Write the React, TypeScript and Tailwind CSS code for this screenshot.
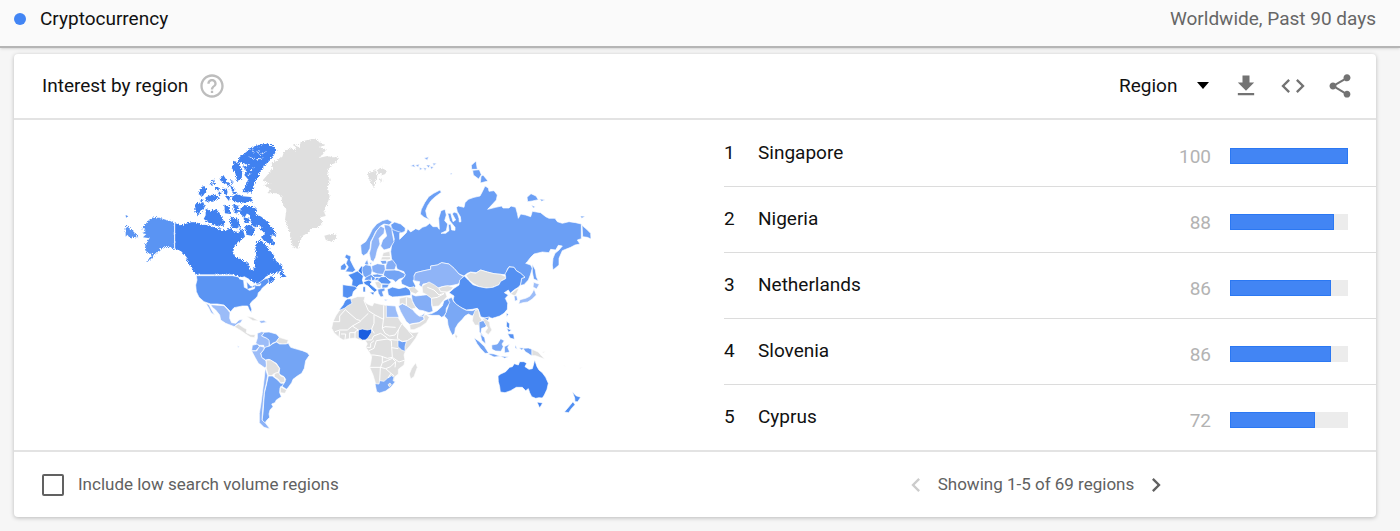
import { useState } from "react";

type Shape = [fill: string, d: string];

interface MapPart {
  name: string;
  transform: string;
  rough?: boolean;
  shapes: Shape[];
  borders?: string;
}

const NO_DATA = "#dfdfdf";

const rows = [
  { name: "Singapore", value: 100 },
  { name: "Nigeria", value: 88 },
  { name: "Netherlands", value: 86 },
  { name: "Slovenia", value: 86 },
  { name: "Cyprus", value: 72 },
];

const mapParts: MapPart[] = [
  {
    name: "Canada and Alaska",
    transform: "translate(0 0)",
    rough: true,
    shapes: [
      ["#5a94f3", "M70 295L85 275 95 265 110 261 130 266 150 272 167 277V360L155 352 140 350 125 358 110 372 95 388 80 400 100 372 85 370 78 355 80 340 92 325 72 322 82 312 70 310 80 300z"],
      ["#5a94f3", "M20 286L35 298 45 306 58 322 42 322 35 327 25 314 20 320zM20 255l8 4-7 4z"],
      ["#4081f0", "M167 277L185 286 205 280 220 276 235 278 250 284 265 285 285 292 300 298 320 302 335 294 345 302 358 310 362 295 372 300 378 320 360 335 345 352 343 372 350 382 365 388 380 395 388 402 393 418 402 422 408 408 405 395 412 380 410 362 408 340 425 330 440 345 450 358 462 372 468 390 480 400 490 408 488 420 475 428 455 432 440 440 428 455 415 462 410 458 400 462 395 450 380 445 355 437 342 434H237L228 420 215 398 200 378 185 362 167 358z"],
      ["#4081f0", "M440 450L455 438 467 444 460 456 450 460zM482 432L490 420 495 433 503 440 488 442z"],
      ["#4081f0", "M200 385L210 388 222 402 232 420 236 436 226 428 214 408z"],
      ["#4081f0", "M392 260L412 253 427 260 442 272 452 286 464 298 472 318 456 316 462 330 470 348 452 342 436 334 426 320 438 312 430 302 416 294 402 288 396 275z"],
      ["#4081f0", "M364 236L373 225 386 228 400 228 412 238 414 258 395 262 385 248 377 262 363 252z"],
      ["#4081f0", "M260 236L275 244 290 238 300 246 308 260 316 276 300 290 285 285 268 276 254 267 260 256zM229 220L253 217 258 230 246 243 238 258 229 246z"],
      ["#4081f0", "M316 224L332 228 334 252 318 250zM335 260L358 267 364 292 344 296 332 280zM343 222L358 228 356 251 344 245zM378 288L396 284 408 300 402 318 382 314zM374 262l17 4-2 14-14-4zM300 268l14 6 4 14-12-2z"],
      ["#4081f0", "M358 84L385 64 400 51 420 44 445 41 466 49 472 65 458 83 445 96 432 114 421 126 419 142 409 152 404 168 398 188 371 186 381 162 389 150 376 135 384 120 369 111 392 104 360 97z"],
      ["#4081f0", "M344 92L360 98 370 122 368 147 354 153 349 130 339 115zM338 200L355 191 370 199 395 201 402 214 370 218 343 216z"],
      ["#4081f0", "M260 202L284 192 302 204 282 215 258 214zM236 191L252 168 266 178 251 199zM302 150L313 135 324 152 318 163zM306 176L328 176 323 197zM332 164L349 178 344 192zM271 162l15-14 2 17zM288 170l14 2-5 13zM320 156l14 2-5 11zM334 150l11 4-5 9zM318 198l16 0-4 15zM242 208l12 0-6 9zM340 184l14 2-4 10zM296 188l12 0-4 10z"],
      ["#ffffff", "M400 52l5 18-3 0zM420 50l-2 20-3-2zM445 62l-24 12 1 4zM386 78l20 8-2 3zM436 82l-22 6 0 4zM410 110l-14 8 1 3zM398 130l-12 6 1 3zM415 284l16 8-10 8-10-6z"],
    ],
    borders: "M167 274V358M237 435H342",
  },
  {
    name: "Greenland, Svalbard",
    transform: "translate(360 0)",
    rough: true,
    shapes: [
      [NO_DATA, "M70 152L85 135 102 115 95 100 112 92 130 80 135 65 155 55 172 62 165 42 182 52 185 35 205 30 225 26 245 38 260 45 240 52 262 58 250 75 238 84 265 78 280 82 298 82 290 98 275 105 265 125 272 150 266 175 272 200 264 225 255 240 260 258 245 262 250 280 240 290 215 298 205 310 190 318 180 340 178 356 164 353 155 330 150 300 138 270 142 240 130 220 128 200 115 190 84 190 96 178 75 165 95 160z"],
      [NO_DATA, "M387 128L400 126 408 120 415 130 414 145 408 158 406 178 400 165 388 142zM412 120L430 113 447 124 435 134 420 131zM423 145l11 8-9 6z"],
      [NO_DATA, "M256 317L275 312 293 314 290 327 274 336 260 329z"],
    ],
  },
  {
    name: "United States and Latin America",
    transform: "translate(210 390)",
    shapes: [
      ["#5a94f3", "M22 47H130L145 50 160 58 172 64 185 78 200 75 215 65 225 58 236 54 240 66 230 76 220 84 215 92 208 98 206 108 200 115 188 125 183 133 188 148 187 158 180 148 176 138 160 138 150 140 135 143 125 155 115 145 105 135 85 132 65 132 45 125 30 112 22 95 20 75 24 60z"],
      ["#ffffff", "M150 56l16-6 14 8-14 3zM164 62l9 2 2 22-9-4zM180 62l14 6-4 12-6-6zM176 88l22-8-2 6-14 5zM200 77l16-6-3 6z"],
      ["#9bbcf8", "M65 134L105 137 115 148 123 158 122 175 128 188 140 190 150 180 161 178 155 188 145 192 136 200 110 190 95 180 92 165 80 150 70 142z"],
      ["#9bbcf8", "M50 130L60 134 68 150 77 166 66 158 58 142z"],
      [NO_DATA, "M136 200L148 192 162 202 173 208 172 218 185 224 199 224 196 233 184 231 170 222 156 212zM172 169L190 172 210 182 192 182z"],
      ["#9bbcf8", "M210 183L224 181 234 187 216 190zM146 257l5 3-4 3z"],
      ["#9bbcf8", "M205 220L218 215 226 217 218 228 232 234 242 240 240 258 226 264 224 256 210 256 200 250 205 235z"],
      ["#78a7f5", "M226 217L240 216 262 222 271 232 262 245 250 250 242 258 240 240 232 234 218 228z"],
      [NO_DATA, "M271 232L280 235 298 240 294 251 280 253 272 251 262 245z"],
      ["#85aef6", "M190 256L205 252 212 260 200 272 188 272z"],
      ["#9bbcf8", "M188 273L203 273 212 258 226 262 224 270 215 280 220 294 231 302 233 318 228 324 208 310 198 292z"],
      ["#74a5f5", "M228 262L242 258 250 252 262 246 272 252 290 252 298 250 305 262 325 268 340 272 355 278 361 286 350 302 346 325 338 340 325 348 312 358 308 368 298 382 292 388 278 378 286 368 290 358 285 350 270 342 272 325 262 310 248 302 240 298 230 300 218 292 216 280 224 270z"],
      [NO_DATA, "M232 300L245 300 262 312 271 325 268 337 255 341 248 347 238 347 232 325z"],
      [NO_DATA, "M256 341L268 337 275 348 286 352 288 366 275 369 268 358 256 350z"],
      ["#74a5f5", "M238 348L250 348 266 360 275 370 285 370 278 379 273 385 272 398 277 410 262 420 258 428 248 432 252 440 243 450 240 462 242 472 232 482 228 490 219 480 222 460 224 430 226 400 232 375z"],
      [NO_DATA, "M274 380L293 390 288 400 274 398z"],
      ["#8db3f7", "M229 324L236 347 232 370 226 395 223 425 221 450 219 480 230 490 243 507 225 502 211 488 211 460 216 430 220 400 225 360z"],
    ],
  },
  {
    name: "Russia and Central Asia",
    transform: "translate(840 60)",
    shapes: [
      ["#6b9ff5", "M-20 222L-5 232 8 240 15 235 18 245 2 250 2 268 12 258 22 248 26 236 35 246 50 236 60 240 70 232 82 228 92 220 102 230 115 230 121 238 119 205 126 182 138 178 142 195 137 212 146 222 142 242 126 250 140 250 150 242 148 224 155 222 158 240 168 241 168 232 152 212 146 190 155 190 162 215 170 210 160 192 165 186 175 190 180 205 181 216 186 215 184 200 175 185 172 172 178 168 195 172 198 158 208 148 225 142 243 138 250 125 258 108 268 114 270 124 285 122 295 135 292 150 283 160 266 178 290 172 308 168 312 174 330 174 336 168 350 172 355 190 358 205 365 192 380 195 395 200 400 184 425 188 440 200 450 205 468 205 475 215 490 220 510 215 530 218 547 222V266L535 270 543 282 528 285 515 292 500 298 490 302 480 325 480 345 462 360 460 345 462 325 468 310 480 300 490 288 478 286 470 300 455 298 450 308 430 306 405 312 395 322 385 335 380 340 395 345 400 355 394 375 388 390 375 404 364 406 368 385 378 382 365 370 352 362 345 352 330 350 325 358 320 374 305 373 285 371 265 366 245 360 232 368 215 366 205 370 195 378 180 372 165 355 150 342 128 338 115 345 95 348 95 358 75 362 50 368 45 378 50 386 42 392 50 408 46 416 30 412 8 402 6 392 18 378 15 365-5 358-10 345-22 330-25 305-22 285-14 268-18 250-26 232z"],
      ["#6b9ff5", "M549 226L563 238 575 250 576 267 565 262 551 260zM64 192L67 178 77 158 89 140 104 130 123 120 127 127 109 140 96 152 86 167 80 182 84 200 92 209 75 202z"],
      ["#6b9ff5", "M217 46L231 33 235 58 218 58zM221 61L241 59 247 74 239 87 223 75zM246 79L252 75 267 93 244 99zM384 142L396 131 411 138 418 149 400 153 386 155zM422 147l17 2-11 5zM397 166l12 4-6 4zM544 198l15 1-11 6zM400 343L409 360 412 380 418 393 404 387 400 366z"],
      ["#8fb4f7", "M34 48l11-5 4 9zM49 46l12-4-3 10zM61 52l10 4-9 5zM75 24l14-4-4 11zM81 45l13 0-5 9zM93 49l11 2-7 7zM101 39l12 1-9 7zM73 53l10 2-5 7zM153 69l7 1-4 5z"],
      ["#8fb4f7", "M45 378L50 368 75 362 95 358 95 348 115 345 128 338 150 342 165 355 180 372 194 380 185 392 178 402 165 405 150 408 140 408 125 411 112 416 98 404 85 400 72 402 68 412 60 404 62 395 45 392z"],
      [NO_DATA, "M201 376L215 367 230 370 245 360 265 366 285 371 305 373 320 380 320 386 307 392 299 405 280 412 262 414 240 410 222 400 210 390z"],
    ],
  },
  {
    name: "East Asia and Oceania",
    transform: "translate(930 420)",
    shapes: [
      ["#5490f2", "M106 18L118 30 132 44 150 50 172 54 192 52 210 44 215 34 230 26 230 20 228 12 235 0 240-9 255-8 262 2 275 10 288 22 278 25 274 45 268 52 258 58 250 64 244 70 238 60 226 68 238 75 229 85 236 100 235 118 225 130 212 138 200 142 190 145 178 142 168 145 155 140 150 125 145 115 130 118 112 120 95 112 80 102 72 90 75 78 60 68 75 55 90 45 92 30z"],
      [NO_DATA, "M244 72L262 58 270 55 264 68 258 78z"],
      ["#8fb4f7", "M255 78L263 77 266 90 258 94z"],
      ["#9bbcf8", "M314 37L331 43 323 57 312 51zM315 57L322 75 309 88 296 96 282 98 269 102 273 89 290 85 302 79 310 68z"],
      ["#7aa8f5", "M55 88L68 82 74 95 85 105 100 115 112 121 130 122 145 116 138 130 130 138 118 132 108 138 100 148 88 160 79 175 77 190 70 196 62 180 57 165 55 148 46 138 52 125 58 108z"],
      ["#6fa1f5", "M-8 134L10 130 25 122 40 108 45 92 57 86 62 98 52 115 51 128 45 138 38 142 30 136 10 136z"],
      [NO_DATA, "M79 191L86 199 82 206 78 199z"],
      [NO_DATA, "M138 122L148 118 152 140 159 150 152 160 153 178 147 165 138 166 130 152 132 138z"],
      ["#78a7f5", "M150 156L165 151 176 162 168 172 158 175 156 188 166 202 158 196 151 185zM163 144L182 141 176 152z"],
      [NO_DATA, "M160 146L170 147 182 157 183 168 189 180 178 194 168 186 176 174 168 160z"],
      ["#6fa1f5", "M154 192L167 203 170 222 158 211zM135 203L150 214 166 229 180 251 168 250 154 235 144 221zM173 250L195 252 214 259 195 261z"],
      ["#78a7f5", "M188 225L205 222 215 206 226 212 219 222 223 230 216 244 200 243 189 238zM226 230L242 222 236 232 242 246 227 249zM213 258l26 2-12 5zM259 224l6 14-7-5zM270 233l17 1-9 6z"],
      ["#5490f2", "M233 154L242 161 241 177 232 169zM236 191L254 192 256 208 243 204zM233 175l14 5-8 7zM232 129l6 4-5 8z"],
      ["#6fa1f5", "M282 235L298 234 309 238 309 258 297 250 289 245z"],
      [NO_DATA, "M309 238L328 246 338 258 348 268 330 261 320 257 309 257z"],
      ["#eeeeee", "M338 246l14-3-8 6zM362 240l8 6-6-2zM450 294l12-4-8 6zM404 284l6 8-5-3z"],
      ["#4182f0", "M207 318L215 312 230 305 242 292 250 290 256 281 268 285 272 275 285 275 293 280 288 290 300 298 310 296 314 282 317 269 324 290 330 300 340 308 350 322 358 340 354 358 346 375 340 384 330 383 320 385 308 380 302 368 298 356 290 362 280 352 262 352 245 362 228 368 214 366 212 350 208 335z"],
      ["#4182f0", "M324 396L341 399 332 414z"],
      ["#4f8ef2", "M430 365L441 377 455 382 446 395 438 395 437 384zM432 395L438 404 427 416 419 428 406 426 419 411z"],
    ],
  },
  {
    name: "Africa and Middle East",
    transform: "translate(600 450)",
    shapes: [
      [NO_DATA, "M62 90L50 108 42 125 38 145 45 158 60 172 72 180 90 176 108 174 118 178 130 182 138 180 145 192 140 202 150 215 158 230 155 250 152 262 162 285 168 305 175 330 185 336 200 330 215 318 225 302 228 290 238 282 238 268 255 255 258 240 255 225 260 212 275 195 290 175 300 156 280 158 268 152 255 138 245 125 236 110 230 85 200 76 180 72 165 68 160 78 145 72 135 62 138 50 115 50 98 56z"],
      ["#5490f2", "M95 56L99 70 85 78 78 84 66 89 60 90 72 75 78 62 85 57z"],
      ["#9bbcf8", "M202 76L230 78 232 90 240 112H202z"],
      ["#1a5ee0", "M118 150L130 147 145 150 158 147 157 158 148 172 140 180 130 180 118 172z"],
      ["#6fa1f5", "M237 181L248 184 262 184 258 200 258 214 248 210 237 200z"],
      ["#7aa8f5", "M168 311L180 312 182 302 195 304 205 295 218 287 225 292 222 302 229 305 215 322 200 333 182 339 173 335z"],
      [NO_DATA, "M207 314L213 309 217 315 211 320z"],
      [NO_DATA, "M290 248L295 262 285 290 275 297 271 282 278 265z"],
      ["#9bbcf8", "M238 78L250 71 265 78 280 88 290 100 300 108 312 108 316 118 300 128 285 130 272 133 262 125 252 108 245 95z"],
      [NO_DATA, "M272 134L285 131 300 129 316 119 314 106 322 104 331 112 322 128 305 140 285 149 274 149z"],
      ["#5490f2", "M300 107L310 106 318 98 313 109z"],
      [NO_DATA, "M241 55L262 50 278 54 282 68 291 84 278 87 262 76 250 70 241 74z"],
      ["#83adf6", "M277 43L290 48 310 46 325 44 338 55 338 75 342 94 330 98 312 92 300 90 288 78 280 62z"],
    ],
    borders:
      "M42 125H62V108L80 88M80 90L112 118 125 122 148 100M135 62L148 92 168 105 194 118V76M165 105V130L158 147 166 160M194 112L190 145 198 160 212 168 228 165 238 150 248 132M48 155L62 150H85L100 138 125 124M60 172L62 152M78 178L80 162 66 162M92 176V158H110M108 174V155L118 150M100 138L118 150M140 180L158 180 164 168M164 168L185 160 205 174M142 202H155V190L165 182M150 212L165 205 172 182 205 177 217 182 218 200 220 232 205 235 185 228 165 225 156 225M205 177L228 180 238 180M152 262H185M190 228V248L184 264M190 248L205 242 220 235 230 245 215 260 200 266 185 262M218 203L238 206M220 232L240 246 258 240M230 245L228 262M184 264L182 302M200 266L216 280 207 294M216 280L226 288M238 150L235 175 250 185 265 182 283 170 268 152M190 145L198 140 230 142M262 52L262 76",
  },
  {
    name: "Europe",
    transform: "translate(615 210)",
    shapes: [
      [NO_DATA, "M294 258L315 246 330 254 345 265 355 260 372 257 388 262 380 271 365 278 369 290 355 305 345 318 325 320 322 295 308 284 296 278z"],
      ["#6b9ff5", "M200 74L212 66 230 72 244 84 243 94 233 98 215 92 205 88z"],
      ["#79a8f5", "M112 160L110 135 125 125 135 108 145 88 158 72 175 62 190 58 205 66 195 75 180 72 170 78 155 95 148 110 140 125 138 145 130 160 118 167z"],
      ["#8fb4f7", "M170 78L182 85 180 100 165 115 168 132 160 150 155 172 148 185 140 180 136 160 140 145 142 125 150 108 158 92z"],
      ["#83adf6", "M182 85L180 74 195 76 203 85 205 100 210 125 198 145 180 150 170 138 176 120 188 108z"],
      ["#79a8f5", "M122 190L130 178 134 194 126 196zM136 188l7 0-2 7z"],
      ["#5c96f4", "M67 163L81 169 79 180 89 200 95 210 86 217 64 215 73 201 66 190 71 178 62 172zM50 198L62 189 68 200 63 210 50 210z"],
      ["#4b8bf1", "M72 224L85 220 100 213 112 222 118 228 115 240 119 252 105 255 98 262 83 257 85 240z"],
      ["#5490f2", "M56 254L92 259 100 264 88 275 85 288 70 295 56 290z"],
      ["#3b7eef", "M102 213L112 198 118 202 115 224z"],
      ["#77a7f5", "M115 202L125 194 140 197 145 210 142 222 145 231 125 233 118 227 114 212z"],
      ["#85aef6", "M143 198L160 191 182 194 184 210 178 223 160 222 145 215z"],
      ["#83adf6", "M186 195L190 184 205 179 217 195 212 210 185 209z"],
      [NO_DATA, "M178 158L197 154 200 178 188 183 170 180 174 170z"],
      ["#79a8f5", "M168 182L186 180 189 191 175 193z"],
      ["#73a4f5", "M182 211L212 210 225 212 244 222 240 232 225 238 215 247 208 240 195 238 185 232 178 225z"],
      ["#5c96f4", "M166 230L185 230 195 240 202 246 195 253 172 251 160 240z"],
      ["#6b9ff5", "M140 224L160 222 179 226 168 232 160 241 145 241 120 241 125 232z"],
      ["#4b8bf1", "M118 246L135 240 144 246 138 252 150 262 160 270 152 277 142 268 132 258 122 253zM137 277L151 276 148 286zM117 260h7v16h-7z"],
      [NO_DATA, "M152 246L164 244 173 253 170 267 160 264z"],
      ["#6b9ff5", "M174 253L196 253 190 263 174 265z"],
      ["#6b9ff5", "M161 268L182 264 183 272 175 275 179 289 170 291 163 280zM180 298l12 1-8 3z"],
      ["#5e97f4", "M190 268L205 261 225 266 245 261 260 270 260 286 240 288 220 290 205 291 193 285z"],
      [NO_DATA, "M254 264L270 260 284 274 275 282 260 276z"],
    ],
    borders:
      "M310 262L330 270 345 285 360 280M345 265L350 275 368 276M322 295L340 292 360 281M142 224L152 232 168 232M142 232V241M155 232L152 241M172 180H198M174 170H198",
  },
];

function WorldMap() {
  return (
    <svg
      viewBox="0 0 1440 930"
      className="block w-full"
      role="img"
      aria-label="Interest by region map"
    >
      <defs>
        <filter id="coast" x="-5%" y="-5%" width="110%" height="110%" colorInterpolationFilters="sRGB">
          <feTurbulence type="fractalNoise" baseFrequency="0.35" numOctaves="2" seed="4" />
          <feDisplacementMap
            in="SourceGraphic"
            scale="14"
            xChannelSelector="R"
            yChannelSelector="G"
          />
        </filter>
      </defs>
      {mapParts.map((part) => (
        <g key={part.name} transform={part.transform} stroke="#ffffff" strokeLinejoin="round">
          <g
            strokeWidth={part.rough ? 0 : 2}
            filter={part.rough ? "url(#coast)" : undefined}
          >
            {part.shapes.map(([fill, d]) => (
              <path key={d} fill={fill} d={d} />
            ))}
          </g>
          {part.borders && <path fill="none" strokeWidth="3" d={part.borders} />}
        </g>
      ))}
    </svg>
  );
}

function Icon({ d, className = "" }: { d: string; className?: string }) {
  return (
    <svg viewBox="0 0 24 24" fill="currentColor" className={`size-7 ${className}`} aria-hidden="true">
      <path d={d} />
    </svg>
  );
}

export default function App() {
  const [includeLow, setIncludeLow] = useState(false);

  return (
    <div className="bg-[#f6f6f6] pb-3.5 font-[Roboto,sans-serif] text-[19px] text-[#111111]">
      <header className="flex h-12 items-center justify-between border-b-2 border-[#b5b5b5] bg-[#fafafa] pr-6 pb-2 pl-3.5 shadow-sm">
        <div className="flex items-center gap-3.5">
          <span className="size-3 rounded-full bg-[#4285f4]" />
          <h1>Cryptocurrency</h1>
        </div>
        <span className="text-[#666666]">Worldwide, Past 90 days</span>
      </header>

      <section className="mt-1.5 mr-6 ml-3.5 rounded-sm bg-white shadow-[0_1px_4px_rgba(0,0,0,0.25)]">
        <div className="flex h-[66px] items-center justify-between border-b-2 border-[#e3e3e3] pr-[22px] pl-7">
          <div className="flex items-center gap-2.5">
            <h2>Interest by region</h2>
            <button type="button" aria-label="Help" className="text-[#bdbdbd]">
              <Icon d="M11 18h2v-2h-2v2zm1-16C6.48 2 2 6.48 2 12s4.48 10 10 10 10-4.48 10-10S17.52 2 12 2zm0 18c-4.41 0-8-3.59-8-8s3.59-8 8-8 8 3.59 8 8-3.59 8-8 8zm0-14c-2.21 0-4 1.79-4 4h2c0-1.1.9-2 2-2s2 .9 2 2c0 2-3 1.75-3 5h2c0-2.25 3-2.5 3-5 0-2.21-1.79-4-4-4z" />
            </button>
          </div>
          <div className="flex items-center gap-[19px] text-[#737373]">
            <div className="relative text-[#111111]">
              <select
                aria-label="Resolution"
                className="block w-[90px] appearance-none bg-transparent"
              >
                <option>Region</option>
              </select>
              <svg
                viewBox="0 0 12 7"
                className="pointer-events-none absolute top-2.5 right-0 h-[7px] w-3"
                aria-hidden="true"
              >
                <path d="M0 0h12L6 7z" />
              </svg>
            </div>
            <button type="button" aria-label="Download CSV" className="ml-1">
              <Icon d="M19 9h-4V3H9v6H5l7 7 7-7zM5 18v2h14v-2H5z" />
            </button>
            <button type="button" aria-label="Embed">
              <Icon d="M9.4 16.6L4.8 12l4.6-4.6L8 6l-6 6 6 6 1.4-1.4zm5.2 0l4.6-4.6-4.6-4.6L16 6l6 6-6 6-1.4-1.4z" />
            </button>
            <button type="button" aria-label="Share">
              <Icon d="M18 16.08c-.76 0-1.44.3-1.96.77L8.91 12.7c.05-.23.09-.46.09-.7s-.04-.47-.09-.7l7.05-4.11c.54.5 1.25.81 2.04.81 1.66 0 3-1.34 3-3s-1.34-3-3-3-3 1.34-3 3c0 .24.04.47.09.7L8.04 9.81C7.5 9.31 6.79 9 6 9c-1.66 0-3 1.34-3 3s1.34 3 3 3c.79 0 1.5-.31 2.04-.81l7.12 4.16c-.05.21-.08.43-.08.65 0 1.61 1.31 2.92 2.92 2.92 1.61 0 2.92-1.31 2.92-2.92s-1.31-2.92-2.92-2.92z" />
            </button>
          </div>
        </div>

        <div className="grid grid-cols-[710fr_652fr]">
          <div className="flex justify-center pt-2.5 pr-5">
            <div className="w-[480px]">
              <WorldMap />
            </div>
          </div>
          <table className="w-full border-collapse">
            <tbody>
              {rows.map((row, i) => (
                <tr key={row.name} className="h-[66px] border-b border-[#dcdcdc] last:border-b-0">
                  <td className="w-[34px]">{i + 1}</td>
                  <td>{row.name}</td>
                  <td className="w-16 pt-2 text-right text-[#b3b3b3]">{row.value}</td>
                  <td className="w-[165px] pt-1.5 pr-7 pl-[19px]">
                    <div className="h-4 bg-[#ececec]">
                      <div
                        className="h-full border border-[#2b78f3] bg-[#4285f4]"
                        style={{ width: `${row.value}%` }}
                      />
                    </div>
                  </td>
                </tr>
              ))}
            </tbody>
          </table>
        </div>

        <div className="grid h-[67px] grid-cols-[710fr_652fr] items-center border-t-2 border-[#e3e3e3] text-[17px] text-[#616161]">
          <label className="flex items-center gap-3.5 pl-7">
            <input
              type="checkbox"
              checked={includeLow}
              onChange={(e) => setIncludeLow(e.target.checked)}
              className="size-[22px] appearance-none rounded-xs border-2 border-[#616161] checked:bg-[#4285f4]"
            />
            Include low search volume regions
          </label>
          <div className="flex items-center justify-center gap-2 pr-7">
            <button type="button" aria-label="Previous" disabled className="text-[#cccccc]">
              <Icon d="M15.41 7.41L14 6l-6 6 6 6 1.41-1.41L10.83 12z" />
            </button>
            <span>Showing 1-5 of 69 regions</span>
            <button type="button" aria-label="Next">
              <Icon d="M10 6L8.59 7.41 13.17 12l-4.58 4.59L10 18l6-6z" />
            </button>
          </div>
        </div>
      </section>
    </div>
  );
}
